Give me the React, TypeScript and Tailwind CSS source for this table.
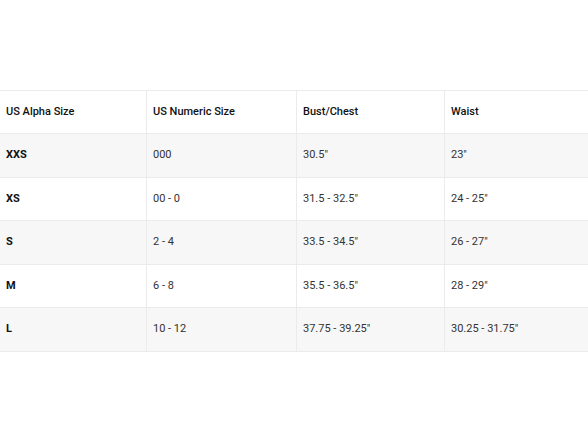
import React from 'react';

const rows = [
  ['XXS', '000', '30.5"', '23"'],
  ['XS', '00 - 0', '31.5 - 32.5"', '24 - 25"'],
  ['S', '2 - 4', '33.5 - 34.5"', '26 - 27"'],
  ['M', '6 - 8', '35.5 - 36.5"', '28 - 29"'],
  ['L', '10 - 12', '37.75 - 39.25"', '30.25 - 31.75"'],
];

const headers = ['US Alpha Size', 'US Numeric Size', 'Bust/Chest', 'Waist'];

const cols = 'grid grid-cols-[147px_150px_148px_1fr]';

export default function App() {
  return (
    <div className="w-[588px] h-[441px] bg-white overflow-hidden pt-[90px]" style={{ fontFamily: 'Roboto, "Liberation Sans", sans-serif' }}>
      <div className="border-t border-[#ebebeb]">
        <div className={`${cols} h-[43px] items-center border-b border-[#ebebeb] bg-white`}>
          {headers.map((h, i) => (
            <div key={h} className={`h-full flex items-center px-[6px] text-[11px] font-medium text-[#111] ${i < 3 ? 'border-r border-[#ebebeb]' : ''}`}>
              {h}
            </div>
          ))}
        </div>
        {rows.map((r, ri) => (
          <div key={r[0]} className={`${cols} h-[43.5px] border-b border-[#ebebeb] ${ri % 2 === 0 ? 'bg-[#f7f7f7]' : 'bg-white'}`}>
            {r.map((c, i) => (
              <div key={i} className={`h-full flex items-center px-[6px] text-[11px] ${i === 0 ? 'font-bold text-[#111]' : 'text-[#333]'} ${i < 3 ? 'border-r border-[#ebebeb]' : ''}`}>
                {c}
              </div>
            ))}
          </div>
        ))}
      </div>
    </div>
  );
}
